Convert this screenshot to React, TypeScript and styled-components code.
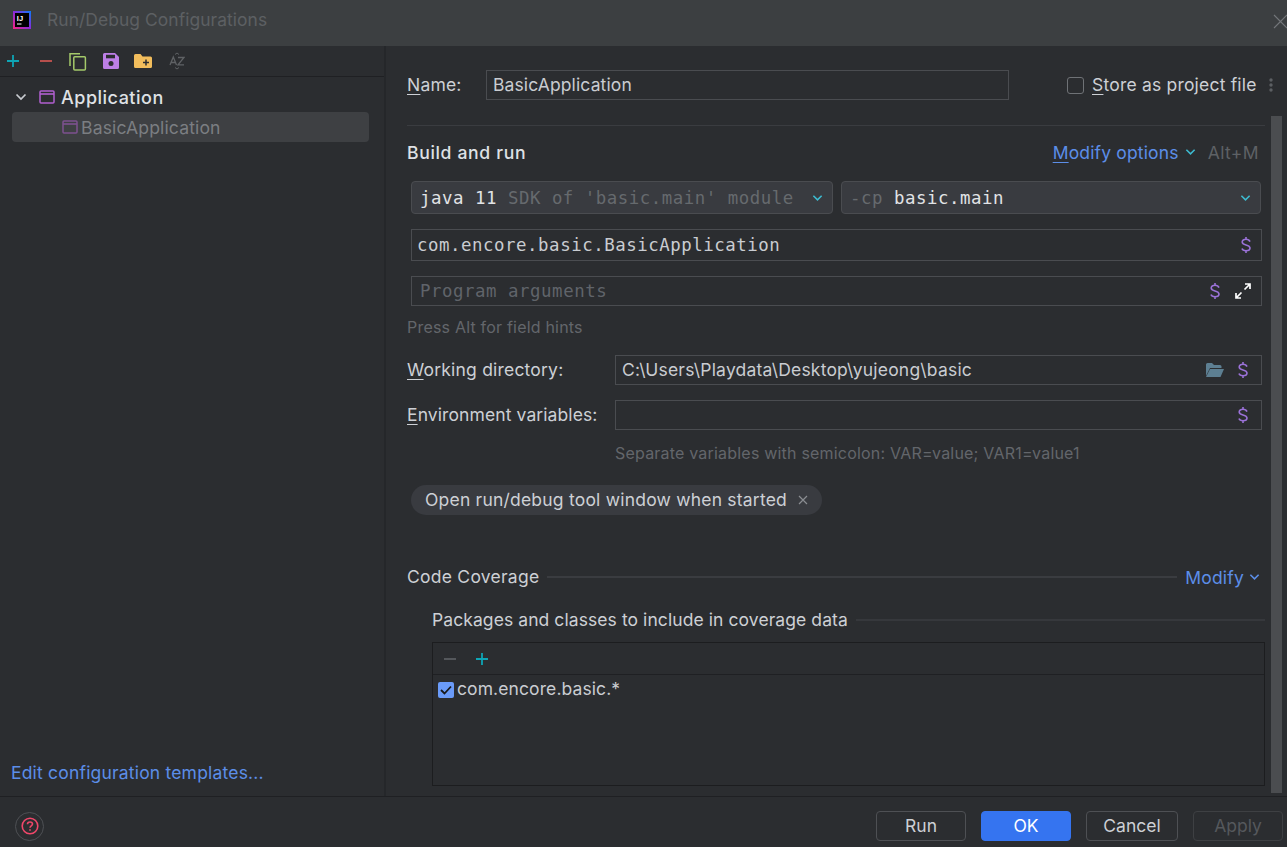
import React from "react";
import styled, { createGlobalStyle } from "styled-components";

const Global = createGlobalStyle`
  html, body { margin: 0; padding: 0; background: #2b2d30; }
  body { font-family: Inter, "Noto Sans", sans-serif; font-size: 17.5px; color: #c9ccd1; overflow: hidden; }
  * { box-sizing: border-box; }
`;

const Dialog = styled.div`
  width: 1287px; height: 847px; display: flex; flex-direction: column; background: #2b2d30; position: relative; overflow: hidden;
`;
const TitleBar = styled.div`
  height: 46px; flex: none; background: #3c3f41; display: flex; align-items: center; padding: 0 0 6px 13px; position: relative;
`;
const TitleText = styled.div` margin-left: 16px; color: #5d6063; font-size: 17.4px; line-height: 22px; letter-spacing: 0.08px; `;
const CloseX = styled.svg` position: absolute; right: -2px; top: 13px; `;
const Main = styled.div` flex: 1; display: flex; min-height: 0; `;
const Sidebar = styled.div`
  width: 386px; flex: none; border-right: 2px solid #25272a; display: flex; flex-direction: column;
`;
const SideToolbar = styled.div`
  height: 31px; flex: none; border-bottom: 1px solid #1f2023; display: flex; align-items: center; padding-left: 6px;
`;
const ToolIcon = styled.span<{ $w: number }>`
  width: ${p => p.$w}px; height: 20px; display: flex; align-items: center; justify-content: flex-start; flex: none;
`;
const Tree = styled.div` flex: 1; padding: 5px 15px 0 12px; display: flex; flex-direction: column; `;
const TreeGroup = styled.div`
  height: 30px; display: flex; align-items: center; padding: 0 0 0 3px; gap: 12px; font-weight: 500; color: #dfe1e5; font-size: 18px;
  letter-spacing: 0.5px;
`;
const GroupName = styled.span` margin-left: -6px; `;
const TreeItem = styled.div`
  height: 30px; border-radius: 4px; background: #3e4043; display: flex; align-items: center; padding-left: 50px; gap: 2px; color: #7b7e82;
  font-size: 17.6px; letter-spacing: 0.12px;
`;
const ItemName = styled.span` margin-left: 1px; `;
const TemplatesLink = styled.div` flex: none; padding: 0 0 12px 11px; color: #5c8ee8; font-size: 17.5px; line-height: 22px; letter-spacing: 0.19px; `;
const Content = styled.div`
  flex: 1; min-width: 0; padding: 24px 25px 0 21px; display: flex; flex-direction: column; position: relative;
`;
const NameRow = styled.div` height: 30px; flex: none; display: flex; align-items: center; `;
const Label = styled.label<{ $w: number; $ls?: number }>` width: ${p => p.$w}px; flex: none; color: #cdd0d5; letter-spacing: ${p => p.$ls ?? 0.2}px; padding-bottom: 2px; `;
const Mnemonic = styled.span` text-decoration: underline; text-underline-offset: 3px; `;
const NameInput = styled.div`
  width: 523px; height: 30px; border: 1px solid #4a4c50; display: flex; align-items: center; padding: 0 0 2px 6px; color: #c9ccd1; flex: none; letter-spacing: 0.12px;
`;
const StoreCheck = styled.div` width: 17px; height: 17px; border: 1px solid #6f7276; border-radius: 3px; margin-left: 58px; flex: none; `;
const StoreLabel = styled.span` margin-left: 8px; color: #cdd0d5; letter-spacing: 0.2px; white-space: nowrap; padding-bottom: 2px; `;
const Kebab = styled.svg` margin-left: 12px; flex: none; `;
const Divider = styled.div` height: 1px; background: #3a3c40; margin-top: 25px; margin-right: -3px; flex: none; `;
const SectionHead = styled.div` margin-top: 14px; height: 24px; display: flex; align-items: center; flex: none; padding-right: 3px; `;
const SectionTitle = styled.div` color: #dfe1e5; font-weight: 500; font-size: 17.6px; flex: 1; letter-spacing: 0.65px; `;
const OptionsLink = styled.span` color: #5c8ee8; letter-spacing: 0.16px; margin-right: 6px; `;
const ShortcutHint = styled.span` color: #5e6165; letter-spacing: 0.4px; margin-left: 12px; `;
const ChevronIcon = styled.svg` flex: none; `;
const ComboRow = styled.div` display: flex; gap: 8px; margin: 17px 0 0 4px; flex: none; `;
const Combo = styled.div<{ $w: number }>`
  width: ${p => p.$w}px; height: 33px; background: #393b40; border: 1px solid #4a4c50; border-radius: 4px; display: flex; align-items: center;
  padding: 0 9px 0 8px; font-family: "DejaVu Sans Mono", monospace; font-size: 17.4px; letter-spacing: 0.52px; color: #e1e3e6; position: relative; white-space: pre;
`;
const Muted = styled.span` color: #666a6e; `;
const ComboChevron = styled.span` margin-left: auto; display: flex; `;
const Field = styled.div<{ $h: number; $top: number }>`
  height: ${p => p.$h}px; margin-top: ${p => p.$top}px; margin-left: 4px; flex: none; border: 1px solid #4a4c50; display: flex; align-items: center;
  padding: 0 10px 0 5px; color: #c9ccd1; white-space: pre;
  font-family: "DejaVu Sans Mono", monospace; font-size: 17.4px; letter-spacing: 0.54px;
`;
const Placeholder = styled.span` color: #60646a; margin-left: 3px; `;
const FieldIcons = styled.span` margin-left: auto; display: flex; align-items: center; gap: 15px; `;
const HintLine = styled.div<{ $top: number; $left?: number }>`
  margin-top: ${p => p.$top}px; margin-left: ${p => p.$left ?? 0}px; color: #63666b; font-size: 16px; line-height: 20px; flex: none; letter-spacing: 0.2px;
`;
const FormRow = styled.div<{ $top: number }>` margin-top: ${p => p.$top}px; height: 30px; display: flex; align-items: center; flex: none; `;
const FormField = styled.div`
  flex: 1; height: 30px; border: 1px solid #4a4c50; display: flex; align-items: center; padding: 0 13px 2px 6px; color: #c9ccd1; min-width: 0; letter-spacing: 0.2px;
`;
const FormIcons = styled(FieldIcons)` gap: 14px; margin-top: 2px; `;
const Chip = styled.div`
  align-self: flex-start; margin: 22px 0 0 4px; height: 30px; border-radius: 15px; background: #393b40; display: flex; align-items: center; padding: 0 14px 2px; color: #cdd0d5; flex: none; letter-spacing: 0.21px;
`;
const ChipClose = styled.svg` margin: 2px 0 0 11px; `;
const TitledLine = styled.div<{ $top: number; $left?: number; $right: number }>`
  margin-top: ${p => p.$top}px; margin-left: ${p => p.$left ?? 0}px; margin-right: ${p => p.$right}px; height: 24px; display: flex; align-items: center; gap: 8px; flex: none; color: #cdd0d5; white-space: nowrap;
`;
const LineText = styled.span<{ $ls: number }>` padding-bottom: 2px; letter-spacing: ${p => p.$ls}px; `;
const Rule = styled.div<{ $color?: string }>` flex: 1; height: 2px; background: ${p => p.$color ?? "#3a3c40"}; `;
const ModifyLink = styled.span` color: #5c8ee8; display: flex; align-items: center; gap: 5px; letter-spacing: 0.2px; `;
const CoverageTable = styled.div`
  margin: 10px -3px 0 25px; height: 144px; flex: none; border: 1px solid #1c1d1f; display: flex; flex-direction: column;
`;
const TableBar = styled.div` height: 32px; flex: none; border-bottom: 1px solid #1f2023; display: flex; align-items: center; padding-left: 10px; gap: 18px; `;
const TableRow = styled.div` height: 30px; display: flex; align-items: center; padding-left: 5px; gap: 3px; color: #c9ccd1; letter-spacing: 0.1px; `;
const RowText = styled.span` padding-bottom: 4px; `;
const CheckBox = styled.span` width: 16px; height: 16px; background: #6a9bf9; border-radius: 2px; display: flex; align-items: center; justify-content: center; flex: none; `;
const ScrollThumb = styled.div` position: absolute; top: 70px; right: 5px; width: 11px; height: 677px; background: #4b4d50; `;
const Footer = styled.div`
  height: 51px; flex: none; border-top: 1px solid #1f2023; display: flex; align-items: center; padding: 8px 4px 0 15px;
`;
const HelpButton = styled.div` width: 29px; height: 29px; border: 1px solid #4e5054; border-radius: 50%; display: flex; align-items: center; justify-content: center; flex: none; `;
const Buttons = styled.div` margin-left: auto; display: flex; gap: 15px; `;
const Button = styled.div<{ $w: number; $primary?: boolean; $disabled?: boolean }>`
  width: ${p => p.$w}px; height: 30px; border-radius: 4px; display: flex; align-items: center; justify-content: center; font-size: 17.5px; padding-bottom: 2px;
  background: ${p => p.$primary ? "#3574f0" : "transparent"};
  border: 1px solid ${p => p.$primary ? "#3574f0" : p.$disabled ? "#3e4043" : "#4e5054"};
  color: ${p => p.$primary ? "#ffffff" : p.$disabled ? "#55585c" : "#cdd0d5"};
`;
const LogoText = styled.text` font-family: "Liberation Sans", sans-serif; font-size: 7.5px; font-weight: 700; fill: #ffffff; `;

const Chevron = ({ color = "#dfe1e5", w = 12 }: { color?: string; w?: number }) => (
  <ChevronIcon width={w} height={8} viewBox="0 0 12 8" fill="none">
    <path d="M1.5 1.5 6 6l4.5-4.5" stroke={color} strokeWidth="1.7" />
  </ChevronIcon>
);
const Dollar = () => (
  <svg width="10" height="16" viewBox="0 0 10 16" fill="none" stroke="#9b72d8" strokeWidth="1.6">
    <path d="M5 0v2.300M5 13.700V16M9 4.600C8.300 3 6.800 2.300 5 2.300 2.800 2.300 1.200 3.200 1.200 5c0 3.800 7.800 2 7.800 6 0 1.800-1.700 2.700-4 2.700-2 0-3.500-.7-4-2.200" />
  </svg>
);
const WindowIcon = ({ dim }: { dim?: boolean }) => (
  <svg width="16" height="14" viewBox="0 0 16 14" fill="none" opacity={dim ? 0.55 : 1}>
    <rect x="1" y="1" width="14" height="12" rx="1" stroke="#b15fd0" strokeWidth="1.5" />
    <path d="M1 4h14" stroke="#b15fd0" strokeWidth="1.6" />
  </svg>
);

export default function App() {
  return (
    <Dialog>
      <Global />
      <TitleBar>
        <svg width="18" height="18" viewBox="0 0 18 18">
          <defs>
            <linearGradient id="ij" x1="0" y1="1" x2="1" y2="0">
              <stop offset="0" stopColor="#f6237f" />
              <stop offset="0.5" stopColor="#8b2bd9" />
              <stop offset="1" stopColor="#087cfa" />
            </linearGradient>
          </defs>
          <rect width="18" height="18" fill="url(#ij)" />
          <rect x="2" y="2" width="14" height="14" fill="#000" />
          <LogoText x="3.800" y="9.800">IJ</LogoText>
          <rect x="4" y="12.500" width="4.500" height="1" fill="#fff" />
        </svg>
        <TitleText>Run/Debug Configurations</TitleText>
        <CloseX width="16" height="16" viewBox="0 0 16 16" stroke="#74777a" strokeWidth="1.100"><path d="M1 2l13 13M14 2 1 15" /></CloseX>
      </TitleBar>
      <Main>
        <Sidebar>
          <SideToolbar>
            <ToolIcon $w={33}>
              <svg width="14" height="14" viewBox="0 0 14 14" stroke="#0ea5b5" strokeWidth="1.800"><path d="M7 1v12M1 7h12" /></svg>
            </ToolIcon>
            <ToolIcon $w={30}>
              <svg width="13" height="14" viewBox="0 0 13 14" stroke="#c75450" strokeWidth="1.800"><path d="M1 7h12" /></svg>
            </ToolIcon>
            <ToolIcon $w={34}>
              <svg width="18" height="19" viewBox="0 0 18 19" fill="none" stroke="#a4c96a" strokeWidth="1.500"><path d="M1 14V1.800h10" /><rect x="4.800" y="4.800" width="11.600" height="13.200" rx="1" /></svg>
            </ToolIcon>
            <ToolIcon $w={31}>
              <svg width="16" height="16" viewBox="0 0 16 16"><path d="M1.500 0H12l4 4v10.500a1.500 1.500 0 0 1-1.500 1.500h-13A1.500 1.500 0 0 1 0 14.500V1.500A1.500 1.500 0 0 1 1.500 0z" fill="#bd7fe6" /><rect x="3" y="1.800" width="9" height="3.500" fill="#2b2d30" /><circle cx="8" cy="10.500" r="2.500" fill="#2b2d30" /></svg>
            </ToolIcon>
            <ToolIcon $w={35}>
              <svg width="18" height="14" viewBox="0 0 18 14"><path d="M0 1.500A1.500 1.500 0 0 1 1.500 0h5L8.500 2.500h8A1.500 1.500 0 0 1 18 4v8.500a1.500 1.500 0 0 1-1.500 1.500h-15A1.500 1.500 0 0 1 0 12.500z" fill="#f2bd5c" /><path d="M12 5.500v6M9 8.500h6" stroke="#2b2d30" strokeWidth="1.500" /></svg>
            </ToolIcon>
            <ToolIcon $w={20}>
              <svg width="16" height="18" viewBox="0 0 16 18" fill="none" stroke="#5f6265" strokeWidth="1.300"><path d="M1 13 4.300 5l3.200 8M2 10.500h4.600M9 5.500h6L9 12.800h6" /><path d="m6 2.500 2-1.500 2 1.500M6 15.500l2 1.500 2-1.500" strokeWidth="1" /></svg>
            </ToolIcon>
          </SideToolbar>
          <Tree>
            <TreeGroup><Chevron color="#c9ccd1" /><WindowIcon /><GroupName>Application</GroupName></TreeGroup>
            <TreeItem><WindowIcon dim /><ItemName>BasicApplication</ItemName></TreeItem>
          </Tree>
          <TemplatesLink>Edit configuration templates...</TemplatesLink>
        </Sidebar>
        <Content>
          <NameRow>
            <Label $w={79}><Mnemonic>N</Mnemonic>ame:</Label>
            <NameInput>BasicApplication</NameInput>
            <StoreCheck />
            <StoreLabel><Mnemonic>S</Mnemonic>tore as project file</StoreLabel>
            <Kebab width="4" height="14" viewBox="0 0 4 14" fill="#5c5f63"><circle cx="2" cy="2" r="1.700" /><circle cx="2" cy="7" r="1.700" /><circle cx="2" cy="12" r="1.700" /></Kebab>
          </NameRow>
          <Divider />
          <SectionHead>
            <SectionTitle>Build and run</SectionTitle>
            <OptionsLink><Mnemonic>M</Mnemonic>odify options</OptionsLink>
            <Chevron color="#3dbbd0" w={11} />
            <ShortcutHint>Alt+M</ShortcutHint>
          </SectionHead>
          <ComboRow>
            <Combo $w={422}>java 11 <Muted>SDK of 'basic.main' module</Muted><ComboChevron><Chevron color="#3dbbd0" w={11} /></ComboChevron></Combo>
            <Combo $w={420}><Muted>-cp </Muted>basic.main<ComboChevron><Chevron color="#3dbbd0" w={11} /></ComboChevron></Combo>
          </ComboRow>
          <Field $h={32} $top={15}>com.encore.basic.BasicApplication<FieldIcons><Dollar /></FieldIcons></Field>
          <Field $h={30} $top={15}>
            <Placeholder>Program arguments</Placeholder>
            <FieldIcons>
              <Dollar />
              <svg width="16" height="16" viewBox="0 0 16 16" fill="none" stroke="#fff" strokeWidth="1.700"><path d="M9.500 6.500 15 1M10 1h5v5M6.500 9.500 1 15M1 10v5h5" /></svg>
            </FieldIcons>
          </Field>
          <HintLine $top={11}>Press Alt for field hints</HintLine>
          <FormRow $top={18}>
            <Label $w={208}><Mnemonic>W</Mnemonic>orking directory:</Label>
            <FormField>
              C:\Users\Playdata\Desktop\yujeong\basic
              <FormIcons>
                <svg width="18" height="14" viewBox="0 0 18 14"><path d="M0 1.500A1.500 1.500 0 0 1 1.500 0h4.500l2 2h6a1.500 1.500 0 0 1 1.500 1.500V5H4L0 13z" fill="#5d7f92" /><path d="M4 6h14l-3.500 8H0z" fill="#5d7f92" /></svg>
                <Dollar />
              </FormIcons>
            </FormField>
          </FormRow>
          <FormRow $top={15}>
            <Label $w={208} $ls={0.1}><Mnemonic>E</Mnemonic>nvironment variables:</Label>
            <FormField><FormIcons><Dollar /></FormIcons></FormField>
          </FormRow>
          <HintLine $top={13} $left={208}>Separate variables with semicolon: VAR=value; VAR1=value1</HintLine>
          <Chip>
            Open run/debug tool window when started
            <ChipClose width="10" height="10" viewBox="0 0 10 10" stroke="#8a8d91" strokeWidth="1.200"><path d="m1 1 8 8M9 1 1 9" /></ChipClose>
          </Chip>
          <TitledLine $top={50} $right={2}>
            <LineText $ls={0.25}>Code Coverage</LineText>
            <Rule />
            <ModifyLink>Modify<Chevron color="#5c8ee8" w={11} /></ModifyLink>
          </TitledLine>
          <TitledLine $top={19} $left={25} $right={-3}>
            <LineText $ls={0.08}>Packages and classes to include in coverage data</LineText>
            <Rule $color="#36383c" />
          </TitledLine>
          <CoverageTable>
            <TableBar>
              <svg width="14" height="14" viewBox="0 0 14 14" stroke="#5a5d60" strokeWidth="1.800"><path d="M1 7h12" /></svg>
              <svg width="14" height="14" viewBox="0 0 14 14" stroke="#0ea5b5" strokeWidth="1.800"><path d="M7 1v12M1 7h12" /></svg>
            </TableBar>
            <TableRow>
              <CheckBox><svg width="12" height="10" viewBox="0 0 12 10" fill="none" stroke="#17191c" strokeWidth="1.800"><path d="m1 5 3.500 3.500L11 1.500" /></svg></CheckBox>
              <RowText>com.encore.basic.*</RowText>
            </TableRow>
          </CoverageTable>
          <ScrollThumb />
        </Content>
      </Main>
      <Footer>
        <HelpButton>
          <svg width="18" height="18" viewBox="0 0 18 18" fill="none" stroke="#f0476a" strokeWidth="1.600">
            <circle cx="9" cy="9" r="7.800" />
            <path d="M6.500 7.200C6.500 5.800 7.600 5 9 5s2.500.8 2.500 2.100c0 1.900-2.500 1.800-2.500 3.700" />
            <path d="M9 12.200v1.500" />
          </svg>
        </HelpButton>
        <Buttons>
          <Button $w={90}>Run</Button>
          <Button $w={90} $primary>OK</Button>
          <Button $w={92}>Cancel</Button>
          <Button $w={90} $disabled>Apply</Button>
        </Buttons>
      </Footer>
    </Dialog>
  );
}
